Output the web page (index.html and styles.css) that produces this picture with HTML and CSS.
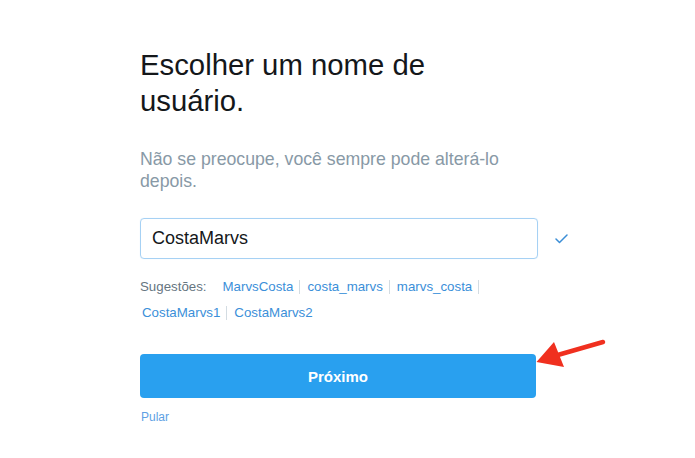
FILE: index.html
```html
<!DOCTYPE html>
<html lang="pt">
<head>
<meta charset="utf-8">
<title>Escolher um nome de usuário</title>
<link rel="stylesheet" href="styles.css">
</head>
<body>
<main class="page">
  <h1 class="title">Escolher um nome de usuário.</h1>
  <p class="subtitle">Não se preocupe, você sempre pode alterá-lo depois.</p>
  <div class="field-row">
    <div class="field">CostaMarvs</div>
    <svg class="check" width="13" height="10" viewBox="0 0 13 10" aria-hidden="true">
      <path d="M1 5 L4.5 8.5 L12 1" fill="none" stroke="#3b8ed6" stroke-width="1.5" stroke-linecap="round" stroke-linejoin="round"/>
    </svg>
  </div>
  <div class="sugg">
    <span class="sugg-label">Sugestões:</span>
    <a class="sugg-item">MarvsCosta</a>
    <a class="sugg-item">costa_marvs</a>
    <a class="sugg-item">marvs_costa</a>
    <a class="sugg-item">CostaMarvs1</a>
    <a class="sugg-item">CostaMarvs2</a>
  </div>
  <button class="next">Próximo</button>
  <a class="skip">Pular</a>
</main>
<svg class="arrow" width="695" height="458" viewBox="0 0 695 458" aria-hidden="true">
  <line x1="603" y1="342" x2="556" y2="355.5" stroke="#f0301f" stroke-width="4.5" stroke-linecap="round"/>
  <polygon points="536.5,362 554,342 564,367" fill="#f0301f"/>
</svg>
</body>
</html>
```

FILE: styles.css
```css
html, body {
  margin: 0;
  padding: 0;
  background: #ffffff;
}

body {
  font-family: "Liberation Sans", Arial, Helvetica, sans-serif;
  width: 695px;
  height: 458px;
  overflow: hidden;
  position: relative;
}

.page {
  padding: 47px 0 0 140px;
  display: flex;
  flex-direction: column;
  align-items: flex-start;
}

.title {
  margin: 0;
  width: 330px;
  font-size: 29.3px;
  line-height: 36px;
  font-weight: normal;
  color: #14171a;
}

.subtitle {
  margin: 29px 0 0 0;
  width: 398px;
  font-size: 17.7px;
  line-height: 22px;
  color: #8899a6;
}

.field-row {
  margin-top: 26px;
  display: flex;
  align-items: center;
}

.field {
  box-sizing: border-box;
  width: 398px;
  height: 41px;
  border: 1px solid #a6d1f4;
  border-radius: 4px;
  box-shadow: 0 0 1px #cfe6f9;
  padding: 0 11px;
  display: flex;
  align-items: center;
  font-size: 18px;
  color: #14171a;
}

.check {
  margin-left: 17px;
  display: block;
}

.sugg {
  margin-top: 15px;
  width: 398px;
  display: flex;
  flex-wrap: wrap;
  align-items: center;
  font-size: 13.3px;
  line-height: 26px;
}

.sugg-label {
  color: #66757f;
  margin-right: 14px;
}

.sugg-item {
  display: flex;
  align-items: center;
  padding-left: 2px;
  margin-right: 5px;
  color: #3b8fd9;
  cursor: pointer;
}

.sugg-item::after {
  content: "";
  width: 1px;
  height: 14px;
  margin-left: 6px;
  background: #d3dce2;
}

.sugg-item:last-child::after {
  display: none;
}

.next {
  margin-top: 28px;
  width: 396px;
  height: 44px;
  border: none;
  border-radius: 4px;
  background: #29a0ef;
  color: #ffffff;
  font-family: "Liberation Sans", Arial, Helvetica, sans-serif;
  font-size: 15px;
  font-weight: bold;
  padding: 0;
  cursor: pointer;
}

.skip {
  margin-top: 11px;
  margin-left: 1px;
  font-size: 12px;
  line-height: 16px;
  color: #5e9fe4;
  cursor: pointer;
}

.arrow {
  position: absolute;
  left: 0;
  top: 0;
  pointer-events: none;
}
```
